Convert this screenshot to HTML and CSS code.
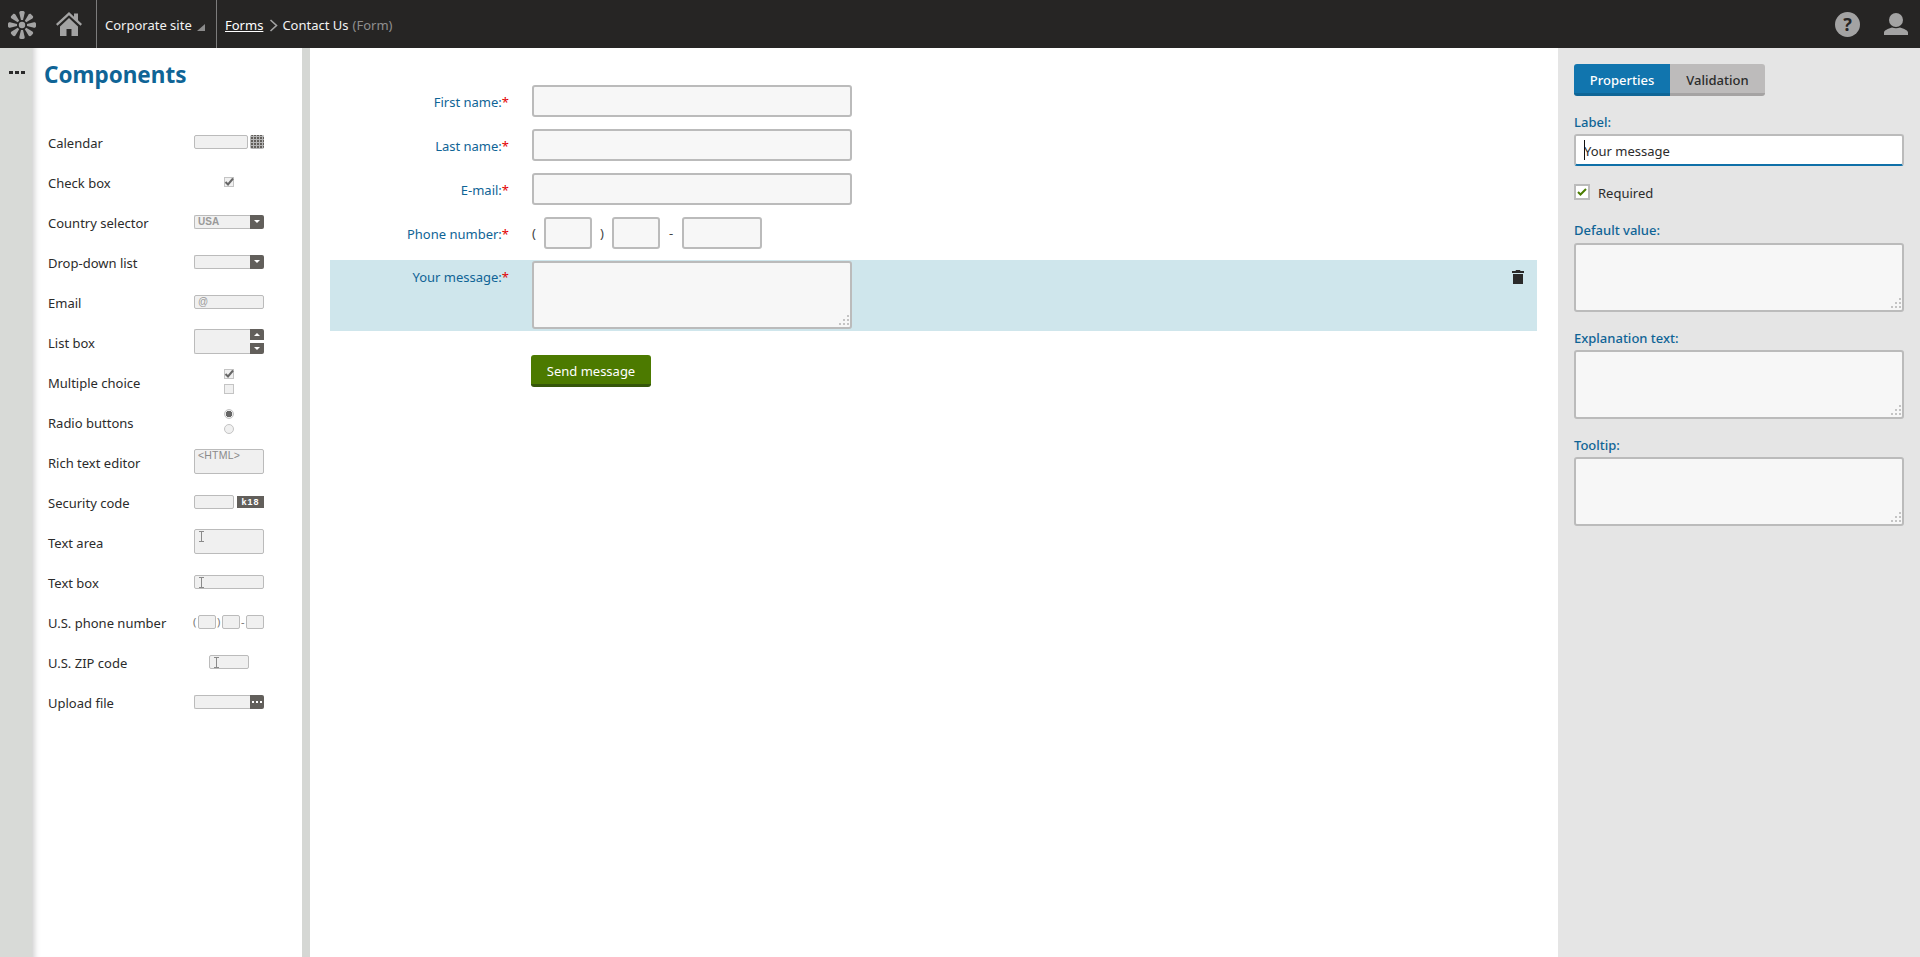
FILE: index.html
```html
<!DOCTYPE html>
<html lang="en">
<head>
<meta charset="utf-8">
<title>Contact Us (Form)</title>
<link rel="stylesheet" href="styles.css">
</head>
<body>
<svg class="defs" width="0" height="0" aria-hidden="true">
  <defs>
    <symbol id="grip" viewBox="0 0 13 12"><g fill="#c4c4c4"><rect x="10" y="0" width="2" height="2"/><rect x="10" y="4" width="2" height="2"/><rect x="6" y="4" width="2" height="2"/><rect x="10" y="8" width="2" height="2"/><rect x="6" y="8" width="2" height="2"/><rect x="2" y="8" width="2" height="2"/></g></symbol>
    <symbol id="ibeam" viewBox="0 0 7 11"><path d="M1 .5h5M1 10.500h5M3.500 .5v10" fill="none" stroke="#8a8a8a" stroke-width="1"/></symbol>
    <symbol id="tick" viewBox="0 0 10 10"><path d="M1.500 5l2.500 2.500 5-6" fill="none" stroke="#666" stroke-width="2"/></symbol>
    <path id="petal" d="M13 9L11.300 2c-.2-1 .5-2 1.500-2h2.400c1 0 1.700 1 1.500 2L15 9z"/>
  </defs>
</svg>
<header class="topbar">
  <div class="logo">
    <svg width="28" height="28" viewBox="0 0 28 28"><g fill="#a3a3a3"><circle cx="14" cy="14" r="3.200"/><use href="#petal"/><use href="#petal" transform="rotate(45 14 14)"/><use href="#petal" transform="rotate(90 14 14)"/><use href="#petal" transform="rotate(135 14 14)"/><use href="#petal" transform="rotate(180 14 14)"/><use href="#petal" transform="rotate(225 14 14)"/><use href="#petal" transform="rotate(270 14 14)"/><use href="#petal" transform="rotate(315 14 14)"/></g></svg>
  </div>
  <div class="home">
    <svg width="26" height="24" viewBox="0 0 26 24"><path fill="#a3a3a3" d="M13 0L0 12l1.500 1.700L13 3.200l11.500 10.500L26 12l-4-3.700V1.500h-4v3.200zM4 14.500V24h6.500v-7h5v7H22v-9.500L13 6z"/></svg>
  </div>
  <div class="site">Corporate site<span class="site-caret"></span></div>
  <nav class="crumbs">
    <a class="crumb-link" href="#">Forms</a>
    <svg class="crumb-sep" width="9" height="13" viewBox="0 0 9 13"><path d="M1.500 1l6 5.500-6 5.500" fill="none" stroke="#a3a3a3" stroke-width="1.600"/></svg>
    <span>Contact Us</span><span class="muted">(Form)</span>
  </nav>
  <div class="top-actions">
    <svg width="25" height="25" viewBox="0 0 25 25"><circle cx="12.500" cy="12.500" r="12.500" fill="#a3a3a3"/><text x="12.500" y="19" text-anchor="middle" class="help-q">?</text></svg>
    <svg width="24" height="22" viewBox="0 0 24 22"><circle cx="12" cy="7" r="7" fill="#a3a3a3"/><path fill="#a3a3a3" d="M0 22v-2.500c0-2 4-4 8-5 2.500 1 5.500 1 8 0 4 1 8 3 8 5V22z"/></svg>
  </div>
</header>

<main class="workspace">
  <div class="strip"><span class="dots"><i></i><i></i><i></i></span></div>

  <aside class="components">
    <h1 class="comp-title">Components</h1>
    <ul class="comp-list">
      <li class="comp"><span class="comp-name">Calendar</span><span class="w"><span class="m m-54"></span><span class="btn-m btn-cal"></span></span></li>
      <li class="comp"><span class="comp-name">Check box</span><span class="w w-c"><span class="mc"><svg width="10" height="10"><use href="#tick"/></svg></span></span></li>
      <li class="comp"><span class="comp-name">Country selector</span><span class="w"><span class="m m-fill m-join mt">USA</span><span class="btn-m btn-join"><i class="tri-d"></i></span></span></li>
      <li class="comp"><span class="comp-name">Drop-down list</span><span class="w"><span class="m m-fill m-join"></span><span class="btn-m btn-join"><i class="tri-d"></i></span></span></li>
      <li class="comp"><span class="comp-name">Email</span><span class="w"><span class="m m-fill mt mt-at">@</span></span></li>
      <li class="comp"><span class="comp-name">List box</span><span class="w"><span class="m m-fill m-tall m-join"></span><span class="spin"><span class="btn-s"><i class="tri-u"></i></span><span class="btn-s"><i class="tri-d"></i></span></span></span></li>
      <li class="comp"><span class="comp-name">Multiple choice</span><span class="w w-c w-stack"><span class="mc"><svg width="10" height="10"><use href="#tick"/></svg></span><span class="mc"></span></span></li>
      <li class="comp"><span class="comp-name">Radio buttons</span><span class="w w-c w-stack w-radio"><span class="mr mr-on"></span><span class="mr"></span></span></li>
      <li class="comp"><span class="comp-name">Rich text editor</span><span class="w"><span class="m m-fill m-tall mt mt-html">&lt;HTML&gt;</span></span></li>
      <li class="comp"><span class="comp-name">Security code</span><span class="w"><span class="m m-40"></span><span class="captcha">k18</span></span></li>
      <li class="comp"><span class="comp-name">Text area</span><span class="w"><span class="m m-fill m-tall"><svg class="ib" width="7" height="11"><use href="#ibeam"/></svg></span></span></li>
      <li class="comp"><span class="comp-name">Text box</span><span class="w"><span class="m m-fill"><svg class="ib" width="7" height="11"><use href="#ibeam"/></svg></span></span></li>
      <li class="comp"><span class="comp-name">U.S. phone number</span><span class="w w-phone"><span class="p">(</span><span class="m m-18"></span><span class="p">)</span><span class="m m-18"></span><span class="p">-</span><span class="m m-18"></span></span></li>
      <li class="comp"><span class="comp-name">U.S. ZIP code</span><span class="w w-c"><span class="m m-40 m-zip"><svg class="ib" width="7" height="11"><use href="#ibeam"/></svg></span></span></li>
      <li class="comp"><span class="comp-name">Upload file</span><span class="w"><span class="m m-fill m-join"></span><span class="btn-m btn-join btn-more"><span class="dots dots-w"><i></i><i></i><i></i></span></span></span></li>
    </ul>
  </aside>

  <div class="gutter"></div>

  <section class="canvas">
    <form class="form">
      <div class="row"><label class="lbl">First name:<em>*</em></label><input class="field" type="text"></div>
      <div class="row"><label class="lbl">Last name:<em>*</em></label><input class="field" type="text"></div>
      <div class="row"><label class="lbl">E-mail:<em>*</em></label><input class="field" type="text"></div>
      <div class="row"><label class="lbl">Phone number:<em>*</em></label>
        <div class="phone"><span class="ph ph-open">(</span><input class="field f-48" type="text"><span class="ph ph-close">)</span><input class="field f-48" type="text"><span class="ph ph-dash">-</span><input class="field f-80" type="text"></div>
      </div>
      <div class="row row-active"><label class="lbl">Your message:<em>*</em></label>
        <div class="ta-wrap"><textarea class="field area"></textarea><svg class="grip" width="13" height="12"><use href="#grip"/></svg></div>
        <svg class="trash" width="12" height="14" viewBox="0 0 12 14"><path fill="#2a2a2a" d="M4 0h4l.500 1H12v2H0V1h3.500zM1 4h10v10H1z"/></svg>
      </div>
      <div class="submit"><button class="send" type="button">Send message</button></div>
    </form>
  </section>

  <aside class="props">
    <div class="tabs"><span class="tab tab-on">Properties</span><span class="tab">Validation</span></div>
    <label class="p-lbl p-first">Label:</label>
    <div class="label-input"><input class="field-p" type="text" value="Your message"><span class="caret"></span></div>
    <div class="req"><span class="req-box"><svg width="10" height="8" viewBox="0 0 10 8"><path d="M1 4l2.500 2.500L9 1" fill="none" stroke="#4a7c00" stroke-width="2"/></svg></span><span class="req-text">Required</span></div>
    <label class="p-lbl p-second">Default value:</label>
    <div class="ta-wrap ta-p"><textarea class="field area-p"></textarea><svg class="grip" width="13" height="12"><use href="#grip"/></svg></div>
    <label class="p-lbl p-next">Explanation text:</label>
    <div class="ta-wrap ta-p"><textarea class="field area-p"></textarea><svg class="grip" width="13" height="12"><use href="#grip"/></svg></div>
    <label class="p-lbl p-next">Tooltip:</label>
    <div class="ta-wrap ta-p"><textarea class="field area-p"></textarea><svg class="grip" width="13" height="12"><use href="#grip"/></svg></div>
  </aside>
</main>
</body>
</html>
```

FILE: styles.css
```css
* { box-sizing: border-box; }
html, body { height: 100%; }
body {
  margin: 0;
  height: 957px;
  overflow: hidden;
  display: flex;
  flex-direction: column;
  font-family: "Noto Sans", "Open Sans", sans-serif;
  font-size: 13px;
  color: #2b2b2b;
  background: #fff;
}
.defs { position: absolute; }

/* top bar */
.topbar {
  flex: 0 0 48px;
  display: flex;
  align-items: stretch;
  background: #262524;
  color: #f2f2f2;
}
.logo { width: 44px; display: flex; align-items: center; padding-left: 8px; padding-top: 1px; }
.home { width: 52px; display: flex; align-items: center; padding-left: 12px; padding-bottom: 1px; }
.site {
  width: 120px;
  padding-left: 8px;
  padding-top: 1px;
  border-left: 1px solid #7c7c7c;
  display: flex;
  align-items: center;
  white-space: pre;
}
.site-caret {
  width: 0; height: 0;
  margin-left: 5px;
  margin-top: 5px;
  border-left: 8px solid transparent;
  border-bottom: 7px solid #8b8b8b;
}
.crumbs {
  flex: 1;
  padding-left: 8px;
  padding-top: 1px;
  border-left: 1px solid #7c7c7c;
  display: flex;
  align-items: center;
  white-space: pre;
}
.crumb-link { color: #fff; text-decoration: underline; }
.crumb-sep { margin: 1px 4px 0 6px; }
.muted { color: #8f8f8f; margin-left: 4px; }
.top-actions { display: flex; align-items: center; gap: 24px; padding-right: 12px; }
.help-q { font: bold 18px "Noto Sans", sans-serif; fill: #262524; }

/* workspace */
.workspace { flex: 1; display: flex; min-height: 0; }
.strip { width: 32px; background: #d8dad7; padding: 23px 0 0 9px; }
.dots { display: flex; gap: 2px; }
.dots i { width: 4px; height: 3px; background: #2a2a2a; display: block; }
.dots-w i { background: #fff; width: 2px; height: 2px; }

.components {
  width: 270px;
  background: #fff;
  box-shadow: inset 8px 0 6px -6px #c9c9c9;
  padding: 11px 0 0 12px;
}
.comp-title {
  margin: 0;
  height: 63px;
  font-size: 22.5px;
  line-height: 32px;
  font-weight: 700;
  color: #0f6496;
}
.comp-list { list-style: none; margin: 0; padding: 0 0 0 4px; }
.comp { height: 40px; display: flex; align-items: center; padding-top: 1px; }
.comp-name { width: 146px; white-space: nowrap; }
.w { width: 70px; margin-top: -2px; display: flex; align-items: center; }
.w-c { justify-content: center; }
.w-stack { flex-direction: column; gap: 5px; }
.w-radio { gap: 5px; }
.m {
  display: block;
  position: relative;
  height: 14px;
  background: #f0f0f0;
  border: 1px solid #bbb;
  border-radius: 2px;
  overflow: hidden;
}
.m-fill { flex: 1; }
.m-54 { width: 54px; margin-right: 2px; }
.m-40 { width: 40px; margin-right: 3px; }
.w-c .m-zip { margin-right: 1px; }
.m-18 { width: 18px; }
.m-tall { height: 25px; }
.m-join { border-radius: 2px 0 0 2px; border-right: 0; }
.mt { font: bold 10px/12px "Liberation Sans", sans-serif; color: #999; padding-left: 3px; }
.mt-at { font-weight: 400; font-size: 10px; }
.mt-html { font-weight: 400; font-size: 10.5px; line-height: 10px; padding-left: 3px; letter-spacing: .2px; color: #8a8a8a; }
.ib { display: block; margin: 1px 0 0 3px; }
.btn-m {
  width: 14px; height: 14px;
  background: #625f5b;
  border-radius: 2px;
  display: flex; align-items: center; justify-content: center;
}
.btn-join { border-radius: 0 2px 2px 0; }
.btn-cal {
  background-color: #625f5b;
  background-image:
    linear-gradient(90deg, transparent 2px, #b5b5b5 2px, #b5b5b5 3px, transparent 3px),
    linear-gradient(0deg, transparent 2px, #b5b5b5 2px, #b5b5b5 3px, transparent 3px);
  background-size: 3px 3px;
  background-position: 1px 1px;
}
.tri-d, .tri-u { display: block; width: 0; height: 0; border-left: 3px solid transparent; border-right: 3px solid transparent; }
.tri-d { border-top: 3px solid #fff; }
.tri-u { border-bottom: 3px solid #fff; }
.spin { width: 14px; height: 25px; display: flex; flex-direction: column; justify-content: space-between; }
.btn-s { height: 11px; background: #625f5b; display: flex; align-items: center; justify-content: center; }
.btn-s:first-child { border-radius: 0 2px 0 0; }
.btn-s:last-child { border-radius: 0 0 2px 0; }
.mc { display: block; width: 10px; height: 10px; background: #f0f0f0; box-shadow: inset 0 0 0 1px #c4c4c4; overflow: visible; }
.mc svg { display: block; }
.mr { display: block; width: 10px; height: 10px; border-radius: 50%; background: #f0f0f0; border: 1px solid #c4c4c4; }
.mr-on { background: radial-gradient(circle, #666 0 3px, #eee 3.500px); }
.captcha {
  flex: 1; height: 12px;
  background: #625f5b; color: #fff;
  font: bold 9px/12px "Liberation Sans", sans-serif;
  text-align: center;
  letter-spacing: 1px;
}
.w-phone { justify-content: space-between; margin-left: -1px; width: 71px; }
.p { color: #777; font-size: 11px; line-height: 14px; }

.gutter { width: 8px; background: #d5d7d4; }

/* form */
.canvas { flex: 1; padding: 37px 21px 0 20px; }
.form { display: flex; flex-direction: column; gap: 12px; }
.row { display: flex; align-items: flex-start; }
.lbl {
  width: 179px;
  padding-top: 8px;
  line-height: 18px;
  text-align: right;
  color: #0f6496;
  font-weight: 400;
  white-space: nowrap;
}
.lbl em { color: #e30000; font-style: normal; }
.field {
  display: block;
  margin: 0;
  padding: 0 6px;
  height: 32px;
  width: 320px;
  background: #f7f7f7;
  border: 2px solid #bbb;
  border-radius: 3px;
  outline: 0;
  font: inherit;
}
.row > .lbl { margin-right: 23px; }
.phone { display: flex; align-items: center; color: #444; }
.ph { width: 12px; font-size: 13px; }
.ph-open { width: 12px; }
.ph-close { width: 20px; text-align: center; }
.ph-dash { width: 22px; text-align: center; }
.f-48 { width: 48px; }
.f-80 { width: 80px; }
.row-active {
  position: relative;
  background: #cfe6ec;
  height: 71px;
  margin-top: -1px;
  padding-top: 1px;
}
.row-active .lbl { padding-top: 7px; }
.area { height: 68px; width: 320px; resize: none; padding: 4px 6px; }
.ta-wrap { position: relative; }
.grip { position: absolute; right: 2px; bottom: 2px; }
.trash { position: absolute; right: 13px; top: 10px; }
.submit { padding: 12px 0 0 201px; }
.send {
  display: block;
  width: 120px;
  height: 32px;
  padding: 2px 0 0;
  background: #4c7a00;
  border: 0;
  border-bottom: 3px solid #35560a;
  border-radius: 3px;
  color: #fff;
  font: 400 13px "Noto Sans", sans-serif;
}

/* properties */
.props { width: 362px; background: #e5e5e5; padding: 16px 16px 0 16px; }
.tabs { display: flex; }
.tab {
  height: 32px;
  width: 95px;
  background: #bdbbbb;
  border-bottom: 3px solid #a5a3a3;
  border-radius: 0 3px 3px 0;
  text-align: center;
  line-height: 33px;
  font-weight: 500;
  color: #2b2b2b;
}
.tab-on {
  width: 96px;
  background: #1175ae;
  border-bottom-color: #0e6596;
  border-radius: 3px 0 0 3px;
  color: #fff;
}
.p-lbl { display: block; color: #0f6496; font-weight: 500; line-height: 18px; }
.p-first { margin-top: 17px; margin-bottom: 3px; }
.p-second { margin-top: 21px; margin-bottom: 4px; }
.p-next { margin-top: 17px; margin-bottom: 3px; }
.label-input { position: relative; }
.field-p {
  display: block;
  width: 330px;
  height: 32px;
  margin: 0;
  padding: 2px 8px 0;
  background: #fff;
  border: 2px solid #bbb;
  border-bottom-color: #0f70a8;
  border-radius: 3px;
  outline: 0;
  font: inherit;
  color: #2b2b2b;
}
.caret { position: absolute; left: 10px; top: 6px; width: 1px; height: 20px; background: #111; }
.req { display: flex; align-items: center; gap: 8px; margin-top: 18px; height: 16px; }
.req-text { padding-top: 1px; }
.req-box {
  width: 16px; height: 16px;
  background: #fff;
  border: 2px solid #bbb;
  display: flex; align-items: center; justify-content: center;
}
.ta-p { width: 330px; }
.area-p { width: 330px; height: 69px; resize: none; }
```
